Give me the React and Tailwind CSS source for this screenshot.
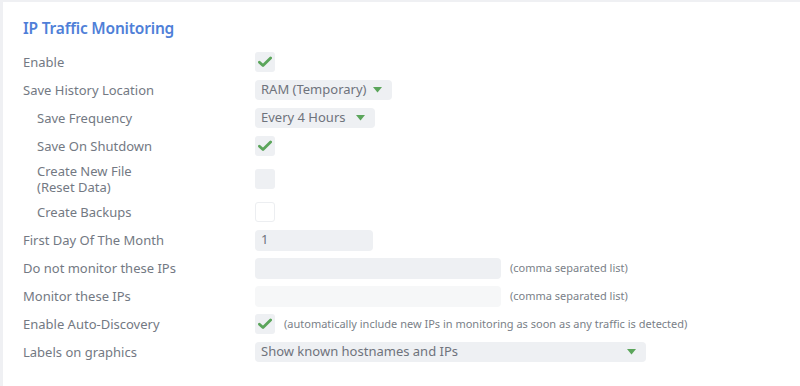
import React from "react";

const Check = () => (
  <svg width="14" height="12" viewBox="0 0 14 12" className="block">
    <path d="M1.4 6.2 L5 9.6 L12.6 2" fill="none" stroke="#5ba55b" strokeWidth="2.8" strokeLinecap="round" strokeLinejoin="round" />
  </svg>
);

const Tri = () => (
  <svg width="9" height="6" viewBox="0 0 9 6" className="block">
    <path d="M0 0 L9 0 L4.5 5.5 Z" fill="#5ba55b" />
  </svg>
);

function Row({ label, indent, tall, children }) {
  return (
    <div className={`flex items-center ${tall ? "h-[38px]" : "h-[28px]"}`}>
      <div className={`w-[232px] shrink-0 leading-[16px] ${indent ? "pl-[14px]" : ""}`}>{label}</div>
      <div className="flex items-center">{children}</div>
    </div>
  );
}

const Box = ({ checked, variant = "gray" }) => (
  <div
    className={`w-[20px] h-[20px] rounded-[3px] flex items-center justify-center ${
      variant === "white" ? "bg-white border border-[#eceef1]" : "bg-[#eef0f3]"
    }`}
  >
    {checked && <Check />}
  </div>
);

const Select = ({ text, w }) => (
  <div className={`${w} h-[20px] rounded-[4px] bg-[#eef0f3] flex items-center justify-between pl-[6px] pr-[10px] text-[13px] text-[#6e737c]`}>
    <span>{text}</span>
    <Tri />
  </div>
);

export default function App() {
  return (
    <div className="w-[800px] h-[386px] bg-[#eff0f3] pt-[2px] pl-[3px] overflow-hidden" style={{ fontFamily: '"Noto Sans", sans-serif' }}>
      <div className="bg-white w-full h-full pl-[20px] text-[13px] text-[#737983]">
        <h1 className="text-[15.5px] font-semibold text-[#4f7fd8] h-[46px] pt-[15px] leading-[22px] tracking-[-0.2px]">IP Traffic Monitoring</h1>
        <Row label="Enable"><Box checked /></Row>
        <Row label="Save History Location"><Select text="RAM (Temporary)" w="w-[137px]" /></Row>
        <Row label="Save Frequency" indent><Select text="Every 4 Hours" w="w-[120px]" /></Row>
        <Row label="Save On Shutdown" indent><Box checked /></Row>
        <Row label={<>Create New File<br />(Reset Data)</>} indent tall><Box /></Row>
        <Row label="Create Backups" indent><Box variant="white" /></Row>
        <Row label="First Day Of The Month">
          <div className="w-[118px] h-[21px] rounded-[4px] bg-[#eef0f3] pl-[6px] flex items-center text-[13px] text-[#6e737c]">1</div>
        </Row>
        <Row label="Do not monitor these IPs">
          <div className="w-[246px] h-[21px] rounded-[4px] bg-[#eef0f3]" />
          <span className="ml-[9px] text-[11px] text-[#7a7f88]">(comma separated list)</span>
        </Row>
        <Row label="Monitor these IPs">
          <div className="w-[246px] h-[21px] rounded-[4px] bg-[#f6f7f8]" />
          <span className="ml-[9px] text-[11px] text-[#7a7f88]">(comma separated list)</span>
        </Row>
        <Row label="Enable Auto-Discovery">
          <Box checked />
          <span className="ml-[9px] text-[11px] text-[#7a7f88]">(automatically include new IPs in monitoring as soon as any traffic is detected)</span>
        </Row>
        <Row label="Labels on graphics"><Select text="Show known hostnames and IPs" w="w-[391px]" /></Row>
      </div>
    </div>
  );
}
